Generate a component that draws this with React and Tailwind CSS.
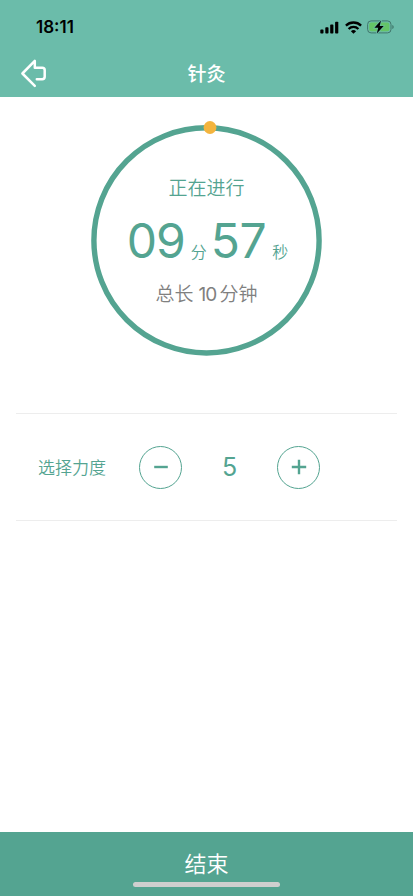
/**
 * Acupuncture session page
 *
 * - Countdown ring with the remaining time
 * - Strength stepper
 * - End button pinned to the bottom
 */

import { useState } from 'react'

function StatusBar() {
  return (
    <div className="flex h-[49px] items-start justify-between pl-[36px] pr-[19px] pt-[17px] text-black">
      <span className="font-['Inter'] text-[17px] font-semibold leading-5">18:11</span>

      <div className="flex items-center gap-[5.5px] pt-[3px]">
        {/* Signal */}
        <svg className="h-[13px] w-[19px]" viewBox="0 0 19 13" fill="currentColor">
          <rect x="0.3" y="8.6" width="3.2" height="3.9" rx="0.8" />
          <rect x="5.3" y="6.3" width="3.2" height="6.2" rx="0.8" />
          <rect x="10.2" y="3.6" width="3.2" height="8.9" rx="0.8" />
          <rect x="15.1" y="0.8" width="3.2" height="11.7" rx="0.8" />
        </svg>

        {/* Wifi */}
        <svg className="h-[13px] w-[17px]" viewBox="0 0 17 13" fill="none" stroke="currentColor">
          <path strokeWidth="2.3" d="M0.9 4.6a10.9 10.9 0 0 1 15.2 0" />
          <path strokeWidth="2.3" d="M3.6 8a6.9 6.9 0 0 1 9.8 0" />
          <path stroke="none" fill="currentColor" d="M8.5 12.8L5.9 10.2a3.8 3.8 0 0 1 5.2 0z" />
        </svg>

        {/* Battery, charging */}
        <svg className="h-[14px] w-[27px]" viewBox="0 0 27 14" fill="none">
          <rect x="0.6" y="0.9" width="23.4" height="12" rx="3.5" stroke="#41776b" />
          <rect x="2.2" y="2.5" width="20.2" height="8.8" rx="2.1" fill="#65c466" />
          <path d="M25.3 5v4c0.8-0.3 1.4-1.1 1.4-2s-0.6-1.7-1.4-2z" fill="#41776b" />
          <path d="M14 0.6L7.4 7.7h3.8l-1.4 5.7 6.9-7.3h-4z" fill="currentColor" stroke="#6bbcaa" strokeWidth="1.4" paintOrder="stroke" />
        </svg>
      </div>
    </div>
  )
}

function NavBar() {
  return (
    <div className="grid h-[48px] grid-cols-[1fr_auto_1fr] items-center px-5 text-white">
      <button type="button" aria-label="返回" className="justify-self-start">
        <svg className="h-[30px] w-[28px]" viewBox="0 0 28 30" fill="none" stroke="currentColor" strokeWidth="2.5" strokeLinecap="round" strokeLinejoin="round">
          <path d="M14.8 27.8L2.4 15.5L14.8 2.9V9.7H22.2Q24.7 9.7 24.7 12.2V18.8Q24.7 21.2 22.2 21.2H16.8" />
        </svg>
      </button>
      <h1 className="text-[19px] font-medium leading-7">针灸</h1>
    </div>
  )
}

function Countdown({ minutes, seconds, total }) {
  return (
    <div className="grid h-[232px] w-[231px]">
      {/* Ring */}
      <svg className="col-start-1 row-start-1 h-[232px] w-[231px] overflow-visible" viewBox="0 0 231 232" fill="none">
        <circle cx="115.5" cy="116.4" r="112.6" stroke="#54a491" strokeWidth="5.4" />
        <circle cx="119" cy="3.5" r="6.4" fill="#f3b43e" />
      </svg>

      <div className="col-start-1 row-start-1 flex flex-col items-center pt-[49px] text-[#54a491]">
        <div className="text-[19px] font-[350] leading-7">正在进行</div>
        <div className="mt-[10px] flex h-[60px] items-baseline pl-[2px] leading-[60px]">
          <span className="font-['Inter'] text-[48px] tracking-[-1px]">{minutes}</span>
          <span className="ml-[6px] text-[16px] font-[350]">分</span>
          <span className="ml-[4px] font-['Inter'] text-[48px] tracking-[-0.5px]">{seconds}</span>
          <span className="ml-[6px] text-[16px] font-[350]">秒</span>
        </div>
        <div className="mt-[8px] flex items-baseline text-[19px] font-[350] leading-7 text-[#808080]">
          <span>总长</span>
          <span className="ml-[5px] mr-[3px] font-['Inter'] text-[19px] font-normal tracking-[-0.8px]">{total}</span>
          <span>分钟</span>
        </div>
      </div>
    </div>
  )
}

function StepButton({ label, onClick, children }) {
  return (
    <button
      type="button"
      aria-label={label}
      onClick={onClick}
      className="flex h-[43px] w-[43px] items-center justify-center rounded-full border border-[#54a491]"
    >
      <svg className="h-4 w-4" viewBox="0 0 16 16" fill="none" stroke="currentColor" strokeWidth="2.4">
        {children}
      </svg>
    </button>
  )
}

export default function App() {
  const [strength, setStrength] = useState(5)

  return (
    <div className="flex h-screen w-full flex-col overflow-hidden bg-white font-['Noto_Sans_CJK_SC',sans-serif]">
      <header className="h-[97px] shrink-0 bg-[#6bbcaa]">
        <StatusBar />
        <NavBar />
      </header>

      <main className="flex-1">
        <div className="flex justify-center pt-[27px]">
          <Countdown minutes="09" seconds="57" total="10" />
        </div>

        {/* Strength */}
        <section className="mx-4 mt-[57px] flex h-[108px] items-center border-y border-[#ededed] pl-[22px] text-[#54a491]">
          <span className="w-[101px] text-[17px] font-[350]">选择力度</span>
          <StepButton label="减小" onClick={() => setStrength(Math.max(1, strength - 1))}>
            <path d="M1.2 8h13.6" />
          </StepButton>
          <span className="w-[95px] pt-[2px] text-center font-['Inter'] text-[25px]">{strength}</span>
          <StepButton label="增大" onClick={() => setStrength(strength + 1)}>
            <path d="M0.8 8h14.4M8 0.8v14.4" />
          </StepButton>
        </section>
      </main>

      <footer className="flex h-16 shrink-0 flex-col items-center bg-[#54a491] text-white">
        <button type="button" className="mt-[14px] text-[22px] font-[350] leading-8">结束</button>
        <div className="mt-[4px] h-[5px] w-[147px] rounded-full bg-[#cfcfcf]" />
      </footer>
    </div>
  )
}
